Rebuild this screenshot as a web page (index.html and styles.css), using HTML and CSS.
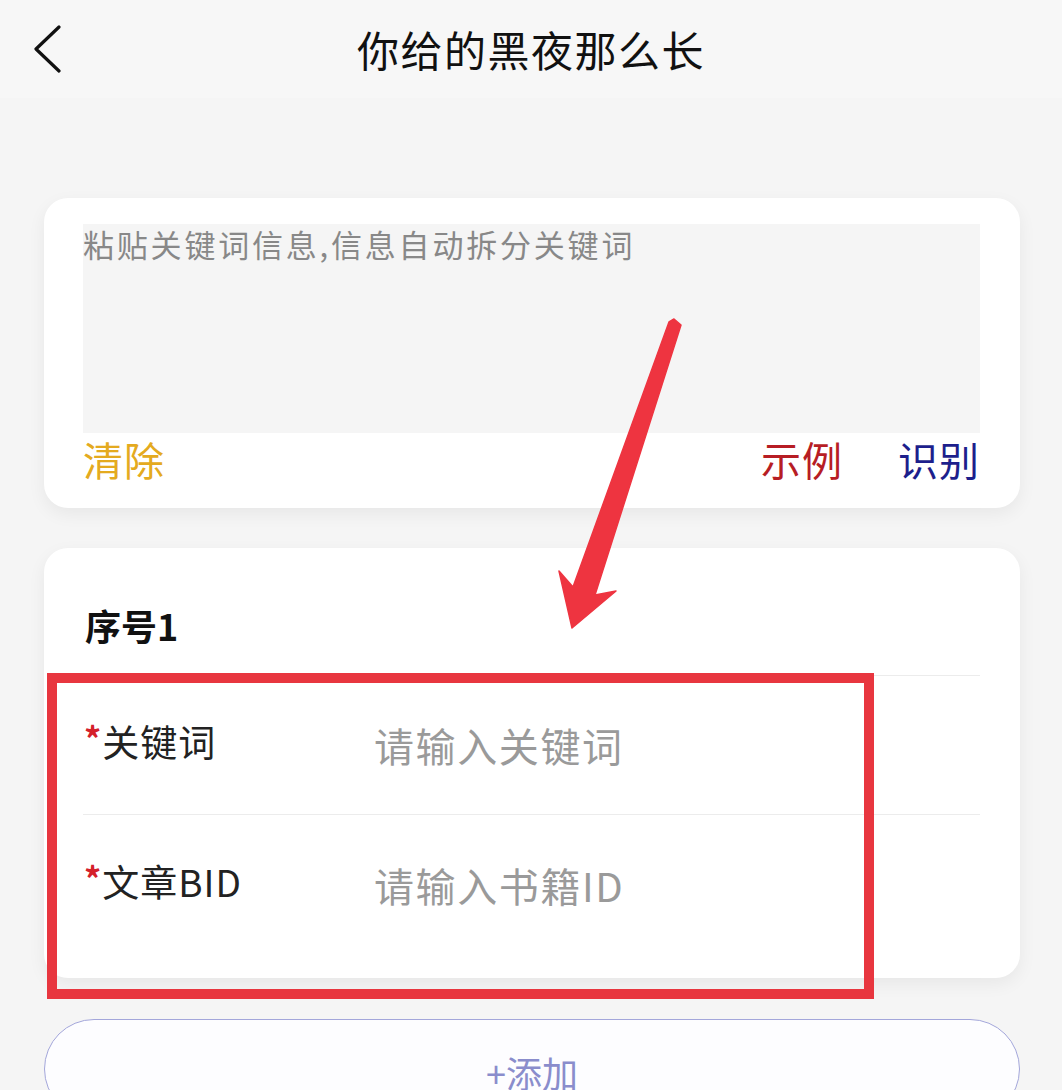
FILE: index.html
```html
<!DOCTYPE html>
<html lang="zh-CN">
<head>
<meta charset="utf-8">
<title>你给的黑夜那么长</title>
<link rel="stylesheet" href="styles.css">
</head>
<body>
<header class="header">
  <div class="back">
    <svg width="30" height="48" viewBox="0 0 30 48"><polyline points="26,2 3,24 26,46" fill="none" stroke="#111" stroke-width="3.2" stroke-linecap="round" stroke-linejoin="round"/></svg>
  </div>
  <h1 class="title">你给的黑夜那么长</h1>
  <div></div>
</header>

<main class="main">
  <section class="card paste-card">
    <div class="paste-area">粘贴关键词信息,信息自动拆分关键词</div>
    <div class="actions">
      <span class="act clear">清除</span>
      <span class="spacer"></span>
      <span class="act example">示例</span>
      <span class="act recog">识别</span>
    </div>
  </section>

  <section class="card form-card">
    <div class="form-head">序号1</div>
    <div class="row">
      <div class="label"><span class="req">*</span>关键词</div>
      <div class="ph">请输入关键词</div>
    </div>
    <div class="row last">
      <div class="label"><span class="req">*</span>文章BID</div>
      <div class="ph">请输入书籍ID</div>
    </div>
  </section>

  <div class="add-btn">+添加</div>
</main>

<div class="mark-box"></div>
<svg class="mark-arrow" width="1062" height="1090" viewBox="0 0 1062 1090">
  <polygon points="669,322 674,319 681,325 595,595 616,591 572,628 559,571 573,587" fill="#ee3440" stroke="#ee3440" stroke-width="1.5" stroke-linejoin="round"/>
</svg>
</body>
</html>
```

FILE: styles.css
```css
html, body {
  margin: 0;
  padding: 0;
}
body {
  background: #f5f5f5;
  font-family: "Noto Sans CJK SC", "Noto Sans", sans-serif;
  width: 1062px;
  height: 1090px;
  overflow: hidden;
  position: relative;
}
.header {
  height: 98px;
  display: grid;
  grid-template-columns: 1fr auto 1fr;
  align-items: center;
  background: #f7f7f7;
}
.back {
  padding-left: 33px;
  display: flex;
  align-items: center;
  height: 48px;
}
.title {
  margin: 0;
  font-size: 42px;
  font-weight: 400;
  color: #111;
  line-height: 50px;
  letter-spacing: 1.5px;
}
.main {
  padding: 0 42px 0 44px;
}
.card {
  background: #fff;
  border-radius: 24px;
  box-shadow: 0 6px 18px rgba(0, 0, 0, 0.06);
}
.paste-card {
  margin-top: 100px;
  padding: 26px 40px 23px 39px;
}
.paste-area {
  height: 209px;
  background: #f5f5f5;
  color: #888;
  font-size: 31px;
  line-height: 40px;
  letter-spacing: 2.8px;
}
.actions {
  height: 52px;
  display: flex;
  align-items: center;
  font-size: 40px;
  line-height: 52px;
  letter-spacing: 1px;
}
.spacer {
  flex: 1;
}
.clear {
  color: #e4aa20;
}
.example {
  color: #b71d24;
  margin-right: 55px;
}
.recog {
  color: #1d1f8c;
}
.form-card {
  margin-top: 40px;
  padding: 0 40px 24px 39px;
}
.form-head {
  padding: 57px 0 30px 2px;
  font-size: 36px;
  line-height: 40px;
  font-weight: 700;
  color: #111;
  border-bottom: 1px solid #ececec;
}
.row {
  height: 138px;
  display: flex;
  align-items: center;
  border-bottom: 1px solid #ececec;
}
.row.last {
  border-bottom: none;
  height: 139px;
}
.label {
  width: 291px;
  padding-left: 1px;
  box-sizing: border-box;
  font-size: 37px;
  line-height: 44px;
  color: #222;
  display: flex;
  align-items: flex-start;
  margin-top: -8px;
  letter-spacing: 1px;
}
.req {
  color: #d4202b;
  font-size: 34px;
  line-height: 34px;
  font-weight: 700;
  margin-right: 1px;
  padding-top: 2px;
  letter-spacing: 0;
}
.ph {
  font-size: 40px;
  line-height: 48px;
  color: #9a9a9a;
  letter-spacing: 1.6px;
}
.add-btn {
  margin-top: 41px;
  height: 100px;
  border: 1.5px solid #a3a6da;
  border-radius: 52px;
  background: #fdfdff;
  display: flex;
  align-items: flex-start;
  justify-content: center;
  font-size: 36px;
  line-height: 44px;
  padding-top: 30px;
  box-sizing: border-box;
  color: #8a8dcc;
}
.mark-box {
  position: absolute;
  left: 47px;
  top: 673px;
  width: 827px;
  height: 326px;
  box-sizing: border-box;
  border: 10px solid #e8363f;
}
.mark-arrow {
  position: absolute;
  left: 0;
  top: 0;
  pointer-events: none;
}
```
